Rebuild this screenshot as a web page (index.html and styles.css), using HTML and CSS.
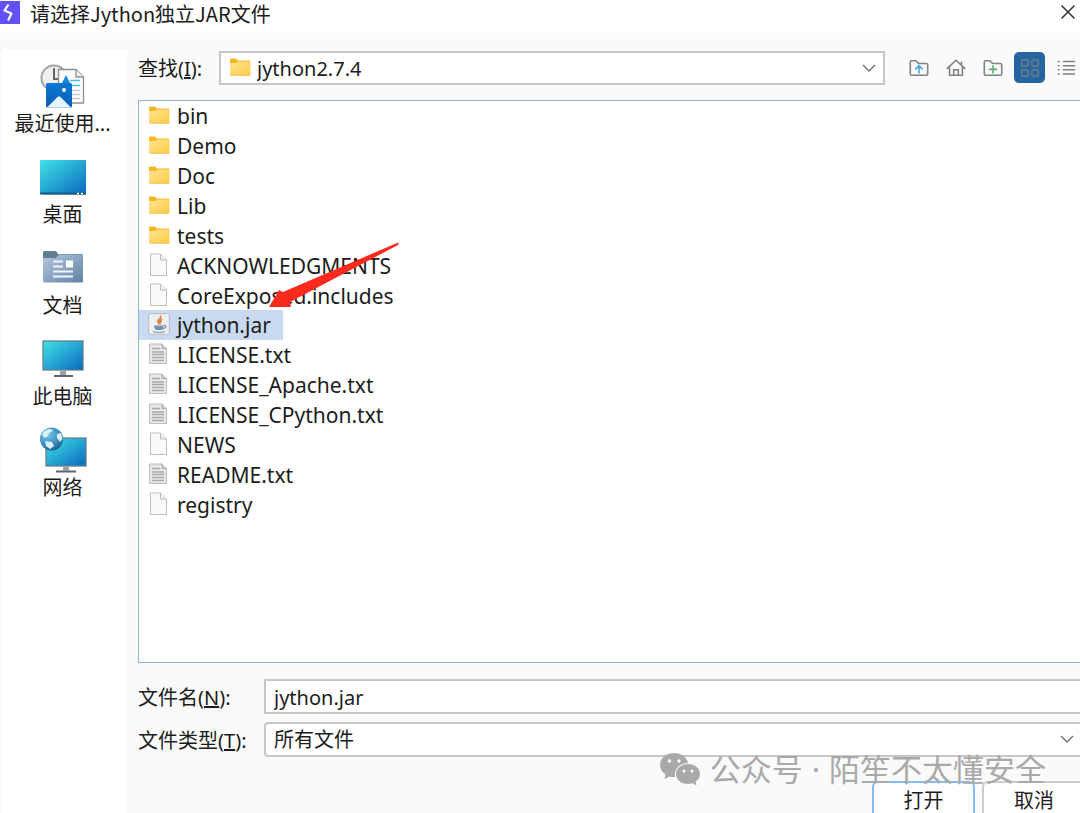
FILE: index.html
```html
<!DOCTYPE html>
<html lang="zh-CN">
<head>
<meta charset="utf-8">
<title>请选择Jython独立JAR文件</title>
<link rel="stylesheet" href="styles.css">
</head>
<body>
<svg class="defs" aria-hidden="true">
  <defs>
    <linearGradient id="gFolder" x1="0" y1="0" x2="1" y2="1"><stop offset="0" stop-color="#ffe596"/><stop offset="1" stop-color="#fdcb41"/></linearGradient>
    <linearGradient id="gScreen" x1="0" y1="0" x2="1" y2="1"><stop offset="0" stop-color="#3fe3e6"/><stop offset=".5" stop-color="#25a6d3"/><stop offset="1" stop-color="#0a67bd"/></linearGradient>
    <linearGradient id="gDocs" x1="0" y1="0" x2="1" y2="1"><stop offset="0" stop-color="#b4c8df"/><stop offset="1" stop-color="#6382a5"/></linearGradient>
    <linearGradient id="gPhoto" x1="0" y1="0" x2="0" y2="1"><stop offset="0" stop-color="#0879d4"/><stop offset="1" stop-color="#0b5cb0"/></linearGradient>
    <radialGradient id="gGlobe" cx=".35" cy=".3" r=".75"><stop offset="0" stop-color="#7fc4e6"/><stop offset=".6" stop-color="#3c92c4"/><stop offset="1" stop-color="#1c608f"/></radialGradient>
    <symbol id="folder" viewBox="0 0 22 20">
      <path d="M1 2.500Q1 1.500 2 1.500H7L9 3.500H21V9H1Z" fill="#f5b722"/>
      <path d="M1 6H7.500L9 4.500H21.500V17.500Q21.500 18.500 20.500 18.500H2Q1 18.500 1 17.500Z" fill="url(#gFolder)"/>
      <path d="M1.500 18.300H21" stroke="#e8b64a" stroke-width=".7"/>
    </symbol>
    <symbol id="blank" viewBox="0 0 22 24">
      <path d="M2.500 1H12.500L18.500 7V22.500H2.500Z" fill="#fafafa" stroke="#bdbdbd"/>
      <path d="M12.500 1V7H18.500" fill="#eee" stroke="#bdbdbd"/>
    </symbol>
    <symbol id="text" viewBox="0 0 22 24">
      <path d="M1.500 2H14L18.500 6.500V21.500H1.500Z" fill="#e8e8e8" stroke="#bcbcbc"/>
      <path d="M14 2V6.500H18.500" fill="#d0d0d0" stroke="#aaa"/>
      <path d="M4 6.500H12M4 10H16M4 12.500H16M4 15.500H16M4 18.500H16" stroke="#a9a9a9" stroke-width="1.300"/>
    </symbol>
    <symbol id="jar" viewBox="0 0 22 24">
      <rect x=".7" y="1.700" width="20.600" height="20.600" rx="1.500" fill="#edf0f2" stroke="#b8bcc2"/>
      <path d="M12.500 3.500C13 6.500 8 7.500 9.500 10.500L11 12.500C11 10 14.500 8 12.500 3.500M14.500 7.500C11.500 9 11 10.500 12.500 12.500" fill="#e88441" stroke="#e27435" stroke-width=".8"/>
      <path d="M6 13.500H15.500V15.500Q15 18 13 18H9Q6.500 18 6 13.500" fill="#7591ac"/>
      <path d="M15.500 13.500Q19 13 17.500 15.500L14.500 17M5 19.500Q11 21.500 17 19.500" fill="none" stroke="#7591ac" stroke-width="1.200"/>
    </symbol>
    <symbol id="chevron" viewBox="0 0 16 16"><path d="M2 5L8 11L14 5" fill="none" stroke="#777" stroke-width="1.500"/></symbol>
  </defs>
</svg>

<div class="dialog">
  <header class="titlebar">
    <svg class="app-icon" viewBox="0 0 20 24" aria-hidden="true">
      <rect y="1" width="20" height="23" fill="#6250f8"/>
      <path d="M8.500 4.500L4.500 10.500L11.500 13.500L8 20.500" fill="none" stroke="#fff" stroke-width="2.200" stroke-linejoin="round"/>
    </svg>
    <h1 class="title">请选择Jython独立JAR文件</h1>
    <button class="close" aria-label="关闭"><svg viewBox="0 0 16 16"><path d="M1.500 1.500L14.500 14.500M14.500 1.500L1.500 14.500" stroke="#333" stroke-width="1.500"/></svg></button>
  </header>

  <div class="content">
    <nav class="places">
      <button class="place">
        <svg viewBox="0 0 48 46">
          <circle cx="15" cy="15" r="12.500" fill="#f0f0f0" stroke="#a3a3a3" stroke-width="2"/>
          <path d="M15 5V16H21" fill="none" stroke="#666" stroke-width="2"/>
          <path d="M19.500 6.500H37L44.500 14V40H19.500Z" fill="#fcfcfc" stroke="#8f8f8f" stroke-width="1.300"/>
          <path d="M37 6.500V14H44.500" fill="#eee" stroke="#8f8f8f" stroke-width="1.300"/>
          <path d="M23 20L27 12L31 20" fill="#1685dc"/>
          <path d="M31 17.500H41M31 22.500H41" stroke="#49bdf0" stroke-width="1.700"/>
          <path d="M33 27.500H41M33 31.500H41M33 35.500H41" stroke="#c7cdd2" stroke-width="1.500"/>
          <rect x="7" y="20" width="26" height="24.500" rx="1.500" fill="url(#gPhoto)"/>
          <path d="M8 44.500L18.500 34Q20 32.500 21.500 34L32 44.500Z" fill="#e5f5ff"/>
          <circle cx="25" cy="27" r="2" fill="#fff"/>
        </svg>
        <span>最近使用...</span>
      </button>
      <button class="place">
        <svg viewBox="0 0 48 46">
          <rect x="1" y="6" width="46" height="34.500" rx="1" fill="url(#gScreen)"/>
          <path d="M1 38.500H47V39.500Q47 40.500 46 40.500H2Q1 40.500 1 39.500Z" fill="#155b83"/>
          <path d="M38 39.500H40M42 39.500H44" stroke="#fff" stroke-width="1.300"/>
        </svg>
        <span>桌面</span>
      </button>
      <button class="place">
        <svg viewBox="0 0 48 46">
          <path d="M4 7.500Q4 6 5.500 6H16Q18 6 19 9H42.500Q44 9 44 10.500V18H4Z" fill="#5f7f8c"/>
          <path d="M4 13H17L20 9.500H42.500Q44 9.500 44 11V36Q44 37.500 42.500 37.500H5.500Q4 37.500 4 36Z" fill="url(#gDocs)"/>
          <path d="M14 16.500H24M14 21.500H24M14 26.500H34M14 31.500H34" stroke="#eef5fb" stroke-width="2.200"/>
          <rect x="27" y="15.500" width="7" height="7" fill="#fff"/>
        </svg>
        <span>文档</span>
      </button>
      <button class="place">
        <svg viewBox="0 0 48 46">
          <rect x="4" y="5" width="40" height="29" fill="url(#gScreen)" stroke="#62808f" stroke-width="1.300"/>
          <path d="M21 34.500H27V39H21Z" fill="#98a4ad"/><path d="M15 40H34" stroke="#596670" stroke-width="2"/>
        </svg>
        <span>此电脑</span>
      </button>
      <button class="place">
        <svg viewBox="0 0 48 46">
          <rect x="7" y="11" width="40" height="28" fill="url(#gScreen)" stroke="#62808f" stroke-width="1.300"/>
          <path d="M24 39H30V43.500H24Z" fill="#98a4ad"/><path d="M17 44.500H37" stroke="#596670" stroke-width="2"/>
          <circle cx="12.500" cy="12" r="11.500" fill="url(#gGlobe)"/>
          <path d="M3 7Q6 2 12 2L14 4L10 6L9 9L5 11ZM6 14L13 15L15 19L11 22L7 19ZM18 7L22 6L23.500 12L21 15L18 11Z" fill="#d9eef5"/>
        </svg>
        <span>网络</span>
      </button>
    </nav>

    <main class="main">
      <div class="lookin">
        <label for="dir">查找(<u>I</u>):</label>
        <div class="combo combo-dir">
          <svg class="combo-icon" aria-hidden="true"><use href="#folder"/></svg>
          <select id="dir"><option>jython2.7.4</option></select>
          <svg class="chevron" aria-hidden="true"><use href="#chevron"/></svg>
        </div>
        <div class="tools">
          <button class="tool" aria-label="向上一级"><svg viewBox="0 0 24 24"><path d="M2.500 18.500V5.500Q2.500 4 4 4H8.500L11.500 7H20Q21.500 7 21.500 8.500V18.500Q21.500 20 20 20H4Q2.500 20 2.500 18.500Z" fill="none" stroke="#818181" stroke-width="1.700"/><path d="M12 18V10M8 13.500L12 9.500L16 13.500" fill="none" stroke="#42a5dc" stroke-width="1.700"/></svg></button>
          <button class="tool" aria-label="主目录"><svg viewBox="0 0 24 24"><path d="M2 13L12 3.500L22 13M5 11V20H19V11M9.500 20V14H14.500V20M18 8.500V5" fill="none" stroke="#818181" stroke-width="1.700"/></svg></button>
          <button class="tool" aria-label="新建文件夹"><svg viewBox="0 0 24 24"><path d="M2.500 18.500V5.500Q2.500 4 4 4H8.500L11.500 7H20Q21.500 7 21.500 8.500V18.500Q21.500 20 20 20H4Q2.500 20 2.500 18.500Z" fill="none" stroke="#818181" stroke-width="1.700"/><path d="M12 9V18M7.500 13.500H16.500" stroke="#55b46c" stroke-width="1.700"/></svg></button>
          <button class="tool tool-on" aria-label="列表" aria-pressed="true"><svg viewBox="0 0 24 24" fill="none" stroke="#6a7a8a" stroke-width="1.800"><rect x="3" y="3" width="7" height="7" rx="1"/><rect x="14" y="3" width="7" height="7" rx="1"/><rect x="3" y="14" width="7" height="7" rx="1"/><rect x="14" y="14" width="7" height="7" rx="1"/></svg></button>
          <button class="tool" aria-label="详细信息"><svg viewBox="0 0 24 24"><path d="M3 5H5M3 9.500H5M3 14H5M3 18.500H5M8.500 5H22M8.500 9.500H22M8.500 14H22M8.500 18.500H22" stroke="#818181" stroke-width="1.700"/></svg></button>
        </div>
      </div>

      <div class="files">
        <ul class="file-list" role="listbox" aria-label="文件">
          <li role="option"><svg><use href="#folder"/></svg>bin</li>
          <li role="option"><svg><use href="#folder"/></svg>Demo</li>
          <li role="option"><svg><use href="#folder"/></svg>Doc</li>
          <li role="option"><svg><use href="#folder"/></svg>Lib</li>
          <li role="option"><svg><use href="#folder"/></svg>tests</li>
          <li role="option"><svg><use href="#blank"/></svg>ACKNOWLEDGMENTS</li>
          <li role="option"><svg><use href="#blank"/></svg>CoreExposed.includes</li>
          <li role="option" class="selected" aria-selected="true"><svg><use href="#jar"/></svg>jython.jar</li>
          <li role="option"><svg><use href="#text"/></svg>LICENSE.txt</li>
          <li role="option"><svg><use href="#text"/></svg>LICENSE_Apache.txt</li>
          <li role="option"><svg><use href="#text"/></svg>LICENSE_CPython.txt</li>
          <li role="option"><svg><use href="#blank"/></svg>NEWS</li>
          <li role="option"><svg><use href="#text"/></svg>README.txt</li>
          <li role="option"><svg><use href="#blank"/></svg>registry</li>
        </ul>
        <svg class="arrow" viewBox="0 0 134 68" aria-hidden="true"><path d="M2 65L12 48L16 50L130 1Q133 0 131 3L23 60L24 65Z" fill="#fb2a1c"/></svg>
      </div>

      <div class="fields">
        <label for="name">文件名(<u>N</u>):</label>
        <input id="name" class="field" type="text" value="jython.jar">
        <label for="type">文件类型(<u>T</u>):</label>
        <div class="combo combo-type">
          <select id="type"><option>所有文件</option></select>
          <svg class="chevron" aria-hidden="true"><use href="#chevron"/></svg>
        </div>
      </div>

      <footer class="actions">
        <button class="action action-main">打开</button>
        <button class="action">取消</button>
      </footer>
    </main>
  </div>

  <div class="watermark">
    <svg viewBox="0 0 42 34" aria-hidden="true">
      <path d="M15 1C7 1 1 6 1 13C1 17 3 20 6.500 22.500L5.500 27L10.500 24.500Q13 25.200 16 25C15 17 20 11 29 11C28 5 22 1 15 1Z" fill="#a9a9a9"/>
      <path d="M29 12C22 12 17 16.500 17 22C17 28 22 32 29 32Q31.500 32 33.500 31.300L37.500 33.500L36.500 29.500C39.500 27.500 41 25 41 22C41 16.500 36 12 29 12Z" fill="#a9a9a9"/>
      <g fill="#fff"><circle cx="10.500" cy="9" r="1.700"/><circle cx="20" cy="9" r="1.700"/><circle cx="25" cy="19" r="1.500"/><circle cx="33" cy="19" r="1.500"/></g>
    </svg>
    <span>公众号</span><span>·</span><span>陌笙不太懂安全</span>
  </div>
</div>
</body>
</html>
```
FILE: styles.css
```css
* { box-sizing: border-box; }

body {
  margin: 0;
  background: #fafafa;
  color: #1c1c1c;
  font: 20px/30px "Noto Sans", "Noto Sans CJK SC", sans-serif;
}

button, input, select {
  margin: 0;
  padding: 0;
  border: 0;
  background: none;
  color: inherit;
  font: inherit;
}

svg { display: block; flex: none; }
.defs { position: absolute; width: 0; height: 0; }

.dialog {
  position: relative;
  display: flex;
  flex-direction: column;
  height: 100vh;
  overflow: hidden;
}

.titlebar {
  display: flex;
  align-items: flex-start;
  gap: 10px;
  height: 33px;
  background: #fff;
}
.app-icon { width: 20px; height: 24px; }
.title {
  flex: 1;
  margin: 0;
  font-size: 20px;
  line-height: 27px;
  font-weight: 400;
  font-family: "Noto Sans CJK SC", sans-serif;
}
.close { padding: 4px 4px 0 0; }
.close svg { width: 16px; height: 16px; }

.content { flex: 1; display: flex; min-height: 0; padding-top: 17px; }

.places {
  display: flex;
  flex-direction: column;
  gap: 15px;
  width: 125px;
  margin-left: 2px;
  padding-top: 13px;
  background: #fff;
}
.place {
  display: flex;
  flex-direction: column;
  align-items: center;
  line-height: 30px;
  padding-right: 4px;
}
.place svg { width: 48px; height: 46px; }

.main {
  flex: 1;
  display: flex;
  flex-direction: column;
  min-width: 0;
  padding-left: 11px;
}

.lookin { display: flex; align-items: center; height: 35px; }
.lookin label { width: 81px; padding-top: 2px; }
.combo { position: relative; border: 2px solid #c9c6c8; background: #fff; }
.combo select { display: block; width: 100%; height: 100%; appearance: none; outline: none; }
.combo-dir { flex: 1; height: 34px; }
.combo-dir select { padding: 1px 0 0 36px; }
.combo-icon { position: absolute; left: 8px; top: 4px; width: 22px; height: 20px; }
.chevron { position: absolute; right: 6px; top: 7px; width: 16px; height: 16px; pointer-events: none; }

.tools { display: flex; align-items: center; gap: 6px; padding-left: 18px; }
.tool {
  display: flex;
  align-items: center;
  justify-content: center;
  width: 31px;
  height: 31px;
  border-radius: 5px;
}
.tool svg { width: 22px; height: 22px; }
.tool-on { background: #2565a2; }
.tools .tool:last-child { width: 29px; }

.files {
  position: relative;
  flex: 1;
  min-height: 0;
  margin-top: 15px;
  border: 1px solid #8fb4de;
  border-right: 0;
  background: #fff;
}
.file-list {
  display: grid;
  grid-auto-rows: 1fr;
  justify-items: start;
  height: 418px;
  margin: 0;
  padding: 0;
  list-style: none;
  font-size: 21px;
}
.file-list li {
  display: flex;
  align-items: center;
  gap: 7px;
  padding: 1px 12px 0 9px;
  line-height: 28px;
}
.file-list svg { width: 22px; height: 24px; margin-bottom: 2px; }
.file-list .selected { background: #c9d9f0; }
.arrow { position: absolute; left: 128px; top: 141px; width: 134px; height: 68px; }

.fields {
  display: grid;
  grid-template-columns: 126px 1fr;
  row-gap: 8px;
  align-items: center;
  padding-top: 16px;
}
.fields label { padding-top: 2px; }
.field {
  height: 35px;
  padding: 2px 0 0 8px;
  border: 2px solid #c9c6c8;
  border-right: 0;
  background: #fff;
  outline: none;
}
.combo-type { height: 35px; border-right: 0; border-radius: 4px 0 0 4px; }
.combo-type select { padding: 1px 0 0 8px; }
.combo-type .chevron { right: 5px; }

.actions {
  display: flex;
  justify-content: flex-end;
  gap: 7px;
  margin-top: 24px;
  margin-bottom: -7px;
}
.action {
  width: 103px;
  height: 39px;
  border: 2px solid #ccc;
  border-radius: 6px;
  background: #fff;
}
.action-main { border-color: #83bdf0; }
.action:last-child { width: 98px; border-right: 0; border-radius: 6px 0 0 6px; padding-left: 4px; }

.watermark {
  position: absolute;
  right: 34px;
  bottom: 24px;
  display: flex;
  align-items: center;
  gap: 9px;
  color: #a9a9a9;
  font: 31px/40px "Noto Sans", "Noto Sans CJK SC", sans-serif;
  pointer-events: none;
}
.watermark svg { width: 42px; height: 34px; }
```
